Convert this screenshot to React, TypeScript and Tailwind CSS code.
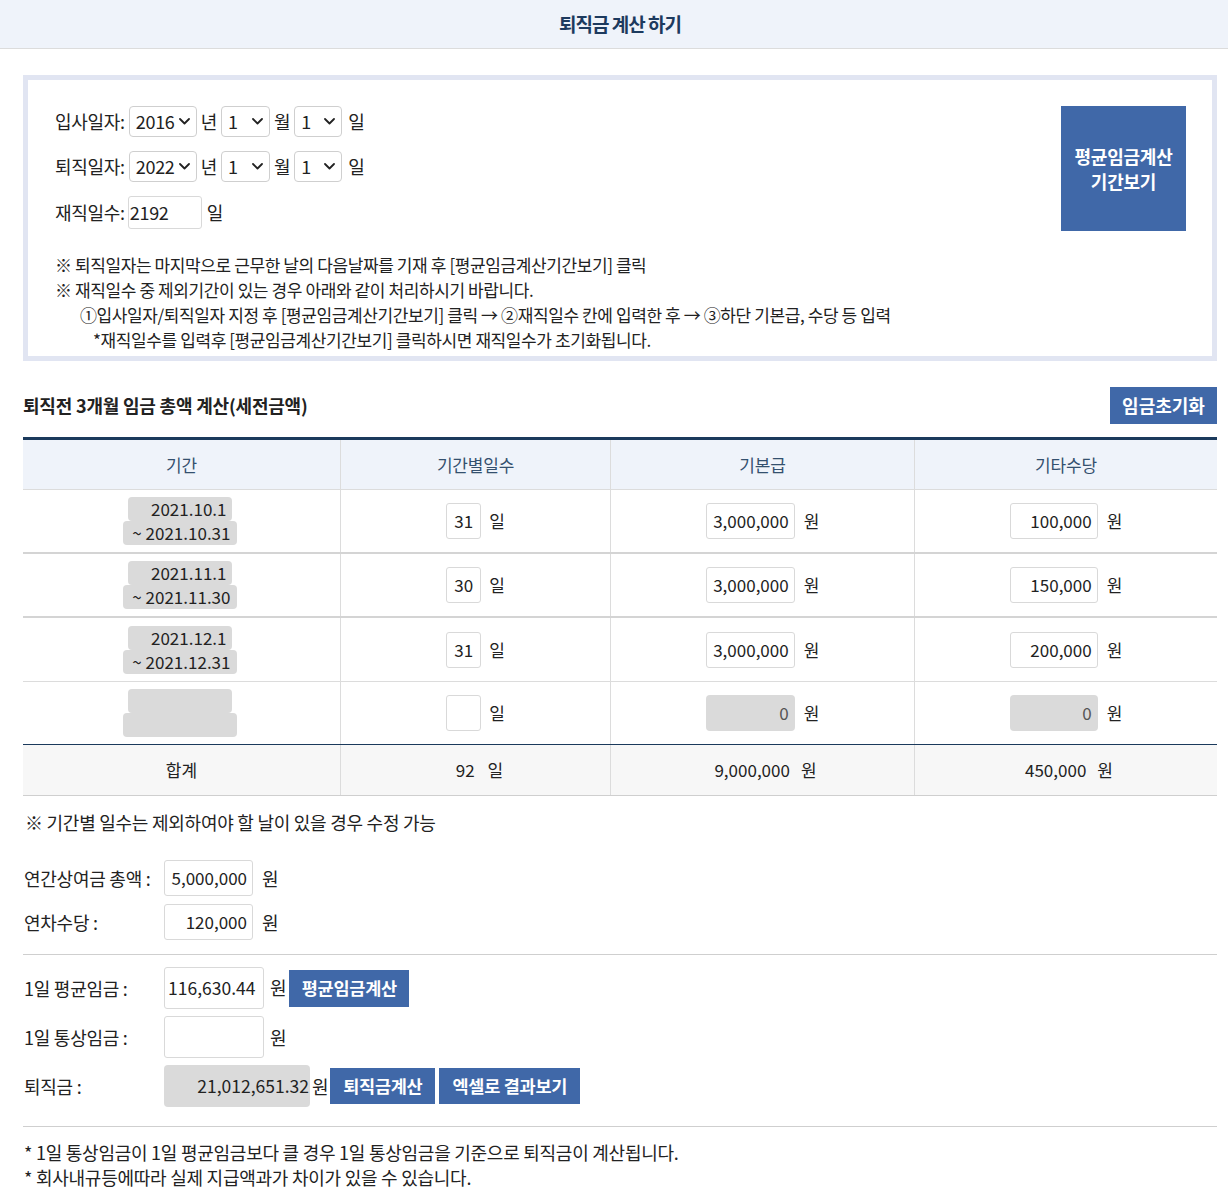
import React from "react";

function Chevron() {
  return (
    <svg width="11" height="7" viewBox="0 0 11 7" fill="none">
      <path d="M1 1l4.5 4.5L10 1" stroke="#222" strokeWidth="1.8" strokeLinecap="round" strokeLinejoin="round" />
    </svg>
  );
}

function Sel({ value, w }: { value: string; w: string }) {
  return (
    <div className={`flex items-center justify-between h-[31px] border border-[#cfcfcf] rounded-[4px] bg-white pl-[6px] pr-[6px] ${w}`}>
      <span>{value}</span>
      <Chevron />
    </div>
  );
}

function Box({ children, cls }: { children?: React.ReactNode; cls: string }) {
  return <div className={`flex items-center border border-[#d9d9d9] rounded-[3px] bg-white ${cls}`}>{children}</div>;
}

const rows = [
  { a: "2021.10.1", b: "~ 2021.10.31", d: "31", p: "3,000,000", o: "100,000" },
  { a: "2021.11.1", b: "~ 2021.11.30", d: "30", p: "3,000,000", o: "150,000" },
  { a: "2021.12.1", b: "~ 2021.12.31", d: "31", p: "3,000,000", o: "200,000" },
];

function Btn({ children, cls }: { children: React.ReactNode; cls: string }) {
  return (
    <div className={`flex items-center justify-center bg-[#4068a8] text-white font-bold ${cls}`}>
      {children}
    </div>
  );
}

export default function App() {
  return (
    <div className="font-['Noto_Sans_CJK_KR','Noto_Sans',sans-serif] text-[#222] bg-white min-h-[1198px]">
      <div className="h-[49px] bg-[#eff3fa] border-b border-[#dcdcdc] flex items-center justify-center pl-[12px]">
        <h1 className="text-[19px] font-bold tracking-[-1px] text-[#1d3a5e]">퇴직금 계산 하기</h1>
      </div>

      <div className="pl-[23px] pr-[11px]">
        <div className="mt-[26px] border-[5px] border-[#e1e5f2] pl-[27px] pr-[26px] pt-[26px] pb-[4px]">
          <div className="flex justify-between">
            <div className="flex flex-col gap-[14px] text-[18px] tracking-[-0.3px]">
              <div className="flex items-center h-[31px] gap-[4px]">
                <span>입사일자:</span>
                <Sel value="2016" w="w-[68px]" />
                <span>년</span>
                <Sel value="1" w="w-[49px]" />
                <span>월</span>
                <Sel value="1" w="w-[48px]" />
                <span className="ml-[2px]">일</span>
              </div>
              <div className="flex items-center h-[31px] gap-[4px]">
                <span>퇴직일자:</span>
                <Sel value="2022" w="w-[68px]" />
                <span>년</span>
                <Sel value="1" w="w-[49px]" />
                <span>월</span>
                <Sel value="1" w="w-[48px]" />
                <span className="ml-[2px]">일</span>
              </div>
              <div className="flex items-center h-[33px]">
                <span>재직일수:</span>
                <Box cls="ml-[3px] w-[74px] h-[33px] pl-[1px]">2192</Box>
                <span className="ml-[5px]">일</span>
              </div>
            </div>
            <div className="w-[125px] h-[125px] bg-[#4068a8] text-white font-bold text-[18px] tracking-[-0.2px] leading-[25px] flex items-center justify-center text-center">
              평균임금계산
              <br />
              기간보기
            </div>
          </div>
          <div className="mt-[21px] text-[17px] leading-[25px] tracking-[-0.4px]">
            <p>※ 퇴직일자는 마지막으로 근무한 날의 다음날짜를 기재 후 [평균임금계산기간보기] 클릭</p>
            <p>※ 재직일수 중 제외기간이 있는 경우 아래와 같이 처리하시기 바랍니다.</p>
            <p className="pl-[25px]">①입사일자/퇴직일자 지정 후 [평균임금계산기간보기] 클릭 → ②재직일수 칸에 입력한 후 → ③하단 기본급, 수당 등 입력</p>
            <p className="pl-[38px]">*재직일수를 입력후 [평균임금계산기간보기] 클릭하시면 재직일수가 초기화됩니다.</p>
          </div>
        </div>

        <div className="mt-[26px] flex items-center justify-between">
          <h2 className="text-[18px] font-bold tracking-[-0.2px]">퇴직전 3개월 임금 총액 계산(세전금액)</h2>
          <Btn cls="w-[107px] h-[37px] text-[18px]">임금초기화</Btn>
        </div>

        <div className="mt-[13px] border-t-[3px] border-[#1b3a5c] text-[17px]">
          <div className="grid grid-cols-[318px_270px_304px_302px] h-[50px] bg-[#eff3fa] border-b border-[#dcdcdc] text-[17px] tracking-[-0.2px] text-[#34506e]">
            <div className="flex items-center justify-center border-r border-[#dcdcdc]">기간</div>
            <div className="flex items-center justify-center border-r border-[#dcdcdc]">기간별일수</div>
            <div className="flex items-center justify-center border-r border-[#dcdcdc]">기본급</div>
            <div className="flex items-center justify-center">기타수당</div>
          </div>

          {rows.map((r, i) => (
            <div
              key={i}
              className={`grid grid-cols-[318px_270px_304px_302px] h-[64px] ${i < 2 ? "border-b-2 border-[#d4d4d4]" : "border-b border-[#dcdcdc]"}`}
            >
              <div className="flex flex-col items-center justify-center border-r border-[#dcdcdc] leading-[24px] pr-[4px]">
                <div className="w-[104px] h-[24px] bg-[#dadada] rounded-[4px] text-right pr-[5px]">{r.a}</div>
                <div className="w-[114px] h-[24px] bg-[#dadada] rounded-[4px] text-right pr-[6px]">{r.b}</div>
              </div>
              <div className="flex items-center justify-center border-r border-[#dcdcdc]">
                <Box cls="w-[35px] h-[36px] justify-center">{r.d}</Box>
                <span className="ml-[8px]">일</span>
              </div>
              <div className="flex items-center justify-center border-r border-[#dcdcdc]">
                <Box cls="w-[89px] h-[36px] justify-end pr-[5px]">{r.p}</Box>
                <span className="ml-[9px]">원</span>
              </div>
              <div className="flex items-center justify-center">
                <Box cls="w-[88px] h-[36px] justify-end pr-[5px]">{r.o}</Box>
                <span className="ml-[9px]">원</span>
              </div>
            </div>
          ))}

          <div className="grid grid-cols-[318px_270px_304px_302px] h-[63px] border-b border-[#1b3a5c]">
            <div className="flex flex-col items-center justify-center border-r border-[#dcdcdc] pr-[4px]">
              <div className="w-[104px] h-[24px] bg-[#dadada] rounded-[4px]"></div>
              <div className="w-[114px] h-[24px] bg-[#dadada] rounded-[4px]"></div>
            </div>
            <div className="flex items-center justify-center border-r border-[#dcdcdc]">
              <Box cls="w-[35px] h-[36px]"></Box>
              <span className="ml-[8px]">일</span>
            </div>
            <div className="flex items-center justify-center border-r border-[#dcdcdc]">
              <div className="w-[89px] h-[36px] rounded-[4px] bg-[#dadada] flex items-center justify-end pr-[6px] text-[#555]">0</div>
              <span className="ml-[9px]">원</span>
            </div>
            <div className="flex items-center justify-center">
              <div className="w-[88px] h-[36px] rounded-[4px] bg-[#dadada] flex items-center justify-end pr-[6px] text-[#555]">0</div>
              <span className="ml-[9px]">원</span>
            </div>
          </div>

          <div className="grid grid-cols-[318px_270px_304px_302px] h-[51px] bg-[#f7f7f7] border-b border-[#cfcfcf]">
            <div className="flex items-center justify-center border-r border-[#dcdcdc]">합계</div>
            <div className="flex items-center justify-center border-r border-[#dcdcdc] pl-[8px]">
              <span>92</span>
              <span className="ml-[13px]">일</span>
            </div>
            <div className="flex items-center justify-center border-r border-[#dcdcdc] pl-[6px]">
              <span>9,000,000</span>
              <span className="ml-[11px]">원</span>
            </div>
            <div className="flex items-center justify-center pl-[6px]">
              <span>450,000</span>
              <span className="ml-[11px]">원</span>
            </div>
          </div>
        </div>

        <p className="mt-[14px] text-[18px] leading-[24px] tracking-[-0.25px] pl-[2px]">※ 기간별 일수는 제외하여야 할 날이 있을 경우 수정 가능</p>

        <div className="mt-[26px] text-[18px] tracking-[-0.25px] flex flex-col gap-[8px]">
          <div className="flex items-center h-[36px]">
            <span className="w-[141px] pl-[1px]">연간상여금 총액 :</span>
            <Box cls="w-[89px] h-[36px] justify-end pr-[5px] text-[17px] tracking-normal">5,000,000</Box>
            <span className="ml-[9px]">원</span>
          </div>
          <div className="flex items-center h-[36px]">
            <span className="w-[141px] pl-[1px]">연차수당 :</span>
            <Box cls="w-[89px] h-[36px] justify-end pr-[5px] text-[17px] tracking-normal">120,000</Box>
            <span className="ml-[9px]">원</span>
          </div>
        </div>

        <div className="mt-[14px] border-t border-[#cfcfcf]"></div>

        <div className="mt-[12px] text-[18px] tracking-[-0.25px] flex flex-col gap-[7px]">
          <div className="flex items-center h-[42px]">
            <span className="w-[141px] pl-[1px]">1일 평균임금 :</span>
            <Box cls="w-[100px] h-[42px] pl-[3px] text-[17.5px] tracking-normal">116,630.44</Box>
            <span className="ml-[6px] self-start mt-[7px]">원</span>
            <Btn cls="ml-[3px] w-[120px] h-[37px] text-[17.5px]">평균임금계산</Btn>
          </div>
          <div className="flex items-center h-[42px]">
            <span className="w-[141px] pl-[1px]">1일 통상임금 :</span>
            <Box cls="w-[100px] h-[42px]"></Box>
            <span className="ml-[6px]">원</span>
          </div>
          <div className="flex items-center h-[42px]">
            <span className="w-[141px] pl-[1px]">퇴직금 :</span>
            <div className="w-[146px] h-[42px] rounded-[4px] bg-[#dadada] flex items-center justify-end pr-[1px] text-[17.5px] tracking-normal">21,012,651.32</div>
            <span className="ml-[2px]">원</span>
            <Btn cls="ml-[2px] w-[105px] h-[36px] text-[17.5px]">퇴직금계산</Btn>
            <Btn cls="ml-[4px] w-[141px] h-[36px] text-[17.5px]">엑셀로 결과보기</Btn>
          </div>
        </div>

        <div className="mt-[19px] border-t border-[#cfcfcf]"></div>

        <div className="mt-[13px] text-[18px] leading-[25px] tracking-[-0.25px] pl-[1px] pb-[8px]">
          <p>* 1일 통상임금이 1일 평균임금보다 클 경우 1일 통상임금을 기준으로 퇴직금이 계산됩니다.</p>
          <p>* 회사내규등에따라 실제 지급액과가 차이가 있을 수 있습니다.</p>
        </div>
      </div>
    </div>
  );
}
